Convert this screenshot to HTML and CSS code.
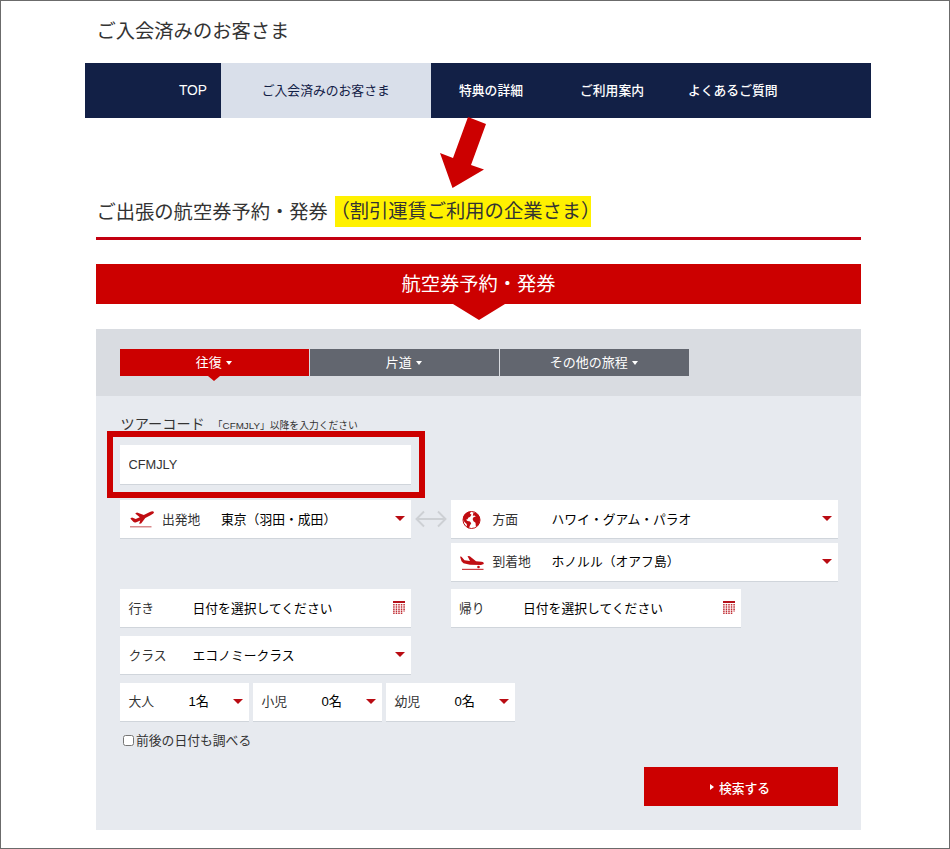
FILE: index.html
```html
<!DOCTYPE html>
<html lang="ja">
  <head>
    <meta charset="UTF-8" />
    <meta name="viewport" content="width=device-width, initial-scale=1.0" />
    <title>ご入会済みのお客さま</title>
    <link rel="stylesheet" href="styles.css">
  </head>
  <body>
    <div class="page">
      <h1>ご入会済みのお客さま</h1>
      <nav class="nav">
        <a href="#" class="nav-top">TOP</a>
        <a href="#" class="nav-active">ご入会済みのお客さま</a>
        <a href="#" class="nav-detail">特典の詳細</a>
        <a href="#" class="nav-guide">ご利用案内</a>
        <a href="#" class="nav-faq">よくあるご質問</a>
      </nav>
      <svg class="pointer" width="50" height="76" viewBox="0 0 50 76">
        <path fill="#c00" d="M29 2 47 9 32 50 45 54.500 13.500 73 1 38 14 43Z" />
      </svg>

      <main>
        <h2>ご出張の航空券予約・発券<span class="highlight">（割引運賃ご利用の企業さま）</span></h2>
        <h3 class="banner">航空券予約・発券</h3>

        <form class="panel">
          <div class="tabs">
            <a href="#" class="tab tab-on">往復<i class="caret"></i></a>
            <a href="#" class="tab">片道<i class="caret"></i></a>
            <a href="#" class="tab">その他の旅程<i class="caret"></i></a>
          </div>

          <div class="fields">
            <label class="tour-label" for="tour">ツアーコード<small>「CFMJLY」以降を入力ください</small></label>
            <div class="tour">
              <input type="text" id="tour" class="box" value="CFMJLY" />
            </div>

            <div class="row route">
              <div class="box w-half place">
                <svg class="icon" width="25" height="20" viewBox="0 0 25 20">
                  <path fill="#c00d12" d="M24.900 3c-.6-1.200-2.300-1-4-.1L14.800 5.900 8 3.500 6.200 4.500l4.600 3.700-4.100 1.900L3 8.500 1.300 9.500l3 3.300c.8.900 1.800.9 3 .4l4-1.800-1.200 3.400 2-.3 4.200-5.500L22 6c1.700-.8 3.200-1.900 2.900-3z" />
                  <path fill="#d98a8c" d="M1 17h21.500v1.500H1z" />
                </svg>
                <span class="name">出発地</span>
                <span class="value">東京（羽田・成田）</span>
                <i class="arrow"></i>
              </div>
              <svg class="swap" width="32" height="18" viewBox="0 0 32 18">
                <path fill="none" stroke="#cdd0d4" stroke-width="1.900" d="M1.500 9h29M9 1.500 1.500 9 9 16.500M23 1.500 30.500 9 23 16.500" />
              </svg>
              <div class="stack">
                <div class="box place">
                  <svg class="icon" width="25" height="20" viewBox="0 0 25 20">
                    <circle cx="12.500" cy="11" r="8.500" fill="#fff" stroke="#c00d12" stroke-width="1" />
                    <path fill="#c00d12" d="M4.500 7C6.500 3.500 9 2.500 12 2.500L10.800 4.500 12.500 5.800 11 8 9.500 8.500 8.500 10.300 7 10.800 8.500 12 11 12.500 12.200 14.300 10.800 16.800 10 19.300 8 18.300 7.700 15 5.500 13 4 10.500ZM14.500 3.200 17 4C19.500 5.500 21 8 21 11L19.800 15 18 17.500 16.800 17 16.500 13.700 14.500 12.300 13.600 10 14.700 8 16.800 7.700 15.500 6.500 13.800 6.800Z" />
                  </svg>
                  <span class="name">方面</span>
                  <span class="value">ハワイ・グアム・パラオ</span>
                  <i class="arrow"></i>
                </div>
                <div class="box place">
                  <svg class="icon" width="25" height="20" viewBox="0 0 25 20">
                    <path fill="#c00d12" d="M1 4.500 2.500 4.800 5.500 8.200 11 9 8.500 4 10.800 4.200 17 9.300 22.500 9.800C24.500 10.100 25 10.900 24.700 12.100L22 13.100 11 12.800 4.500 11.300 2.500 9.300Z" />
                    <path fill="#cb3b40" d="M3 16.800h21.500v1.200H3z" />
                    <circle cx="19.500" cy="15" r="1.300" fill="#c00d12" />
                  </svg>
                  <span class="name">到着地</span>
                  <span class="value">ホノルル（オアフ島）</span>
                  <i class="arrow"></i>
                </div>
              </div>
            </div>

            <div class="row dates">
              <div class="box w-half">
                <span class="name">行き</span>
                <span class="value">日付を選択してください</span>
                <svg class="calendar" width="12" height="13" viewBox="0 0 12 13">
                  <path fill="#b5121b" d="M0 0h12v2H0z" />
                  <path fill="none" stroke="#c02c33" stroke-width="1.500" stroke-dasharray="1.600 .6" d="M.9 3v10M3.450 3v10M6 3v10M8.550 3v10M11.100 3v7.500" />
                </svg>
              </div>
              <div class="box w-half">
                <span class="name">帰り</span>
                <span class="value">日付を選択してください</span>
                <svg class="calendar" width="12" height="13" viewBox="0 0 12 13">
                  <path fill="#b5121b" d="M0 0h12v2H0z" />
                  <path fill="none" stroke="#c02c33" stroke-width="1.500" stroke-dasharray="1.600 .6" d="M.9 3v10M3.450 3v10M6 3v10M8.550 3v10M11.100 3v7.500" />
                </svg>
              </div>
            </div>

            <div class="row">
              <div class="box w-half">
                <span class="name">クラス</span>
                <span class="value">エコノミークラス</span>
                <i class="arrow"></i>
              </div>
            </div>

            <div class="row people">
              <div class="box">
                <span class="name">大人</span>
                <span class="value">1名</span>
                <i class="arrow"></i>
              </div>
              <div class="box">
                <span class="name">小児</span>
                <span class="value">0名</span>
                <i class="arrow"></i>
              </div>
              <div class="box">
                <span class="name">幼児</span>
                <span class="value">0名</span>
                <i class="arrow"></i>
              </div>
            </div>

            <label class="check"><input type="checkbox" />前後の日付も調べる</label>
            <button type="button" class="search"><i></i>検索する</button>
          </div>
        </form>
      </main>
    </div>
  </body>
</html>
```
FILE: styles.css
```css
* {
  box-sizing: border-box;
}
body {
  margin: 0;
  font-family: "Liberation Sans", "Noto Sans CJK JP", sans-serif;
  font-size: 12.8px;
  color: #333;
  background-color: #fff;
}
a {
  color: #fff;
  text-decoration: none;
}
.page {
  position: relative;
  height: 849px;
  border: 1px solid #6b6b6b;
  overflow: hidden;
}
h1,
h2,
h3 {
  margin: 0;
  font-size: 19.3px;
  font-weight: 400;
}
h1 {
  padding: 15px 0 0 95.5px;
  height: 62px;
  line-height: 31px;
}
.nav {
  display: flex;
  width: 786.5px;
  height: 54.5px;
  margin-left: 83.5px;
  line-height: 56px;
  background: #122046;
}
.nav a {
  font-weight: 500;
}
.nav .nav-top {
  width: 136.5px;
  padding-right: 14px;
  text-align: right;
  font-size: 13.8px;
  font-weight: 400;
}
.nav .nav-active {
  width: 209.5px;
  text-align: center;
  font-weight: 400;
  color: #122046;
  background: #d9dfea;
}
.nav-detail {
  margin-left: 28.5px;
}
.nav-guide {
  margin-left: 57px;
}
.nav-faq {
  margin-left: 44px;
}
.pointer {
  position: absolute;
  left: 438px;
  top: 114px;
}
main {
  width: 765px;
  margin-left: 95px;
}
h2 {
  display: flex;
  align-items: center;
  height: 122.5px;
  padding: 68px 0 0 0.5px;
  border-bottom: 3px solid #c30010;
}
.highlight {
  height: 31px;
  width: 256px;
  margin: 0 0 0 7.5px;
  line-height: 32px;
  white-space: nowrap;
  text-indent: -5px;
  background: #fff100;
}
.banner {
  position: relative;
  height: 40px;
  margin-top: 24px;
  line-height: 42px;
  text-align: center;
  color: #fff;
  background: #c00;
}
.banner::after {
  content: "";
  position: absolute;
  top: 100%;
  left: 357px;
  border: solid transparent;
  border-width: 16px 26px 0;
  border-top-color: #c00;
}
.panel {
  height: 501px;
  margin-top: 25px;
  background: #e7eaef;
}
.tabs {
  display: flex;
  gap: 1.5px;
  height: 67px;
  padding: 20px 24px;
  background: #d9dce1;
}
.tab {
  position: relative;
  display: flex;
  align-items: center;
  justify-content: center;
  width: 188.5px;
  height: 27px;
  padding: 0 1px 2px 0;
  font-size: 13px;
  background: #62666f;
}
.tab-on {
  background: #c00;
}
.tab-on::after {
  content: "";
  position: absolute;
  top: 100%;
  left: 88px;
  border: solid transparent;
  border-width: 5px 6px 0;
  border-top-color: #c00;
}
.caret {
  margin: 2px 0 0 4px;
  border: solid transparent;
  border-width: 4px 3.5px 0;
  border-top-color: #fff;
}
.fields {
  display: flex;
  flex-direction: column;
  align-items: flex-start;
  padding: 18px 24px 0;
}
.tour-label {
  height: 17px;
  padding-left: 0.5px;
  line-height: 20px;
  font-size: 14.2px;
}
.tour-label small {
  margin-left: 8px;
  font-size: 9.8px;
}
.tour {
  width: 318px;
  height: 67px;
  margin-left: -13px;
  padding: 8px 7.500px;
  border: 6px solid #c00;
}
.box {
  display: flex;
  align-items: center;
  width: 100%;
  height: 39px;
  padding: 0 6px 1px 8.500px;
  border: 0;
  border-bottom: 1px solid #d0d5db;
  background: #fff;
}
.place {
  padding-bottom: 2px;
}
.tour .box {
  width: 290.5px;
  height: 40px;
  margin-left: -.5px;
  color: #333;
  font-family: inherit;
  font-size: 12.8px;
}
.row {
  display: flex;
  margin-top: 8px;
}
.row.route {
  margin-top: 2px;
}
.row .w-half {
  width: 290.5px;
}
.icon {
  flex: none;
  width: 25px;
  margin: 2px 8.500px 0 0;
}
.swap {
  margin: 10px 4px 0;
}
.stack {
  display: flex;
  flex-direction: column;
  gap: 3.500px;
  width: 387px;
}
.name {
  width: 64px;
}
.place .name {
  width: 59px;
}
.value {
  color: #000;
}
.arrow {
  margin: 1px 0 0 auto;
  border: solid transparent;
  border-width: 5px 5px 0;
  border-top-color: #b90b12;
}
.row.dates {
  gap: 40px;
  margin-top: 7px;
}
.calendar {
  margin: 1px 0 0 auto;
}
.people {
  gap: 4px;
}
.people .box {
  width: 129px;
  padding-bottom: 2px;
}
.people .name {
  width: 60px;
}
.people .value {
  font-size: 13.2px;
}
.check {
  display: flex;
  align-items: center;
  height: 20px;
  margin-top: 8px;
}
.check input {
  width: 11px;
  height: 11px;
  margin: 2px 2px 0 3px;
}
.search {
  display: flex;
  align-items: center;
  justify-content: center;
  align-self: flex-end;
  width: 194px;
  height: 39px;
  margin: 17px -.5px 0 0;
  padding: 2px 1px 0 0;
  border: 0;
  font-family: inherit;
  font-size: 12.8px;
  font-weight: 500;
  color: #fff;
  background: #c00;
}
.search i {
  margin-right: 5px;
  border: solid transparent;
  border-width: 3px 0 3px 4px;
  border-left-color: #fff;
}
```
